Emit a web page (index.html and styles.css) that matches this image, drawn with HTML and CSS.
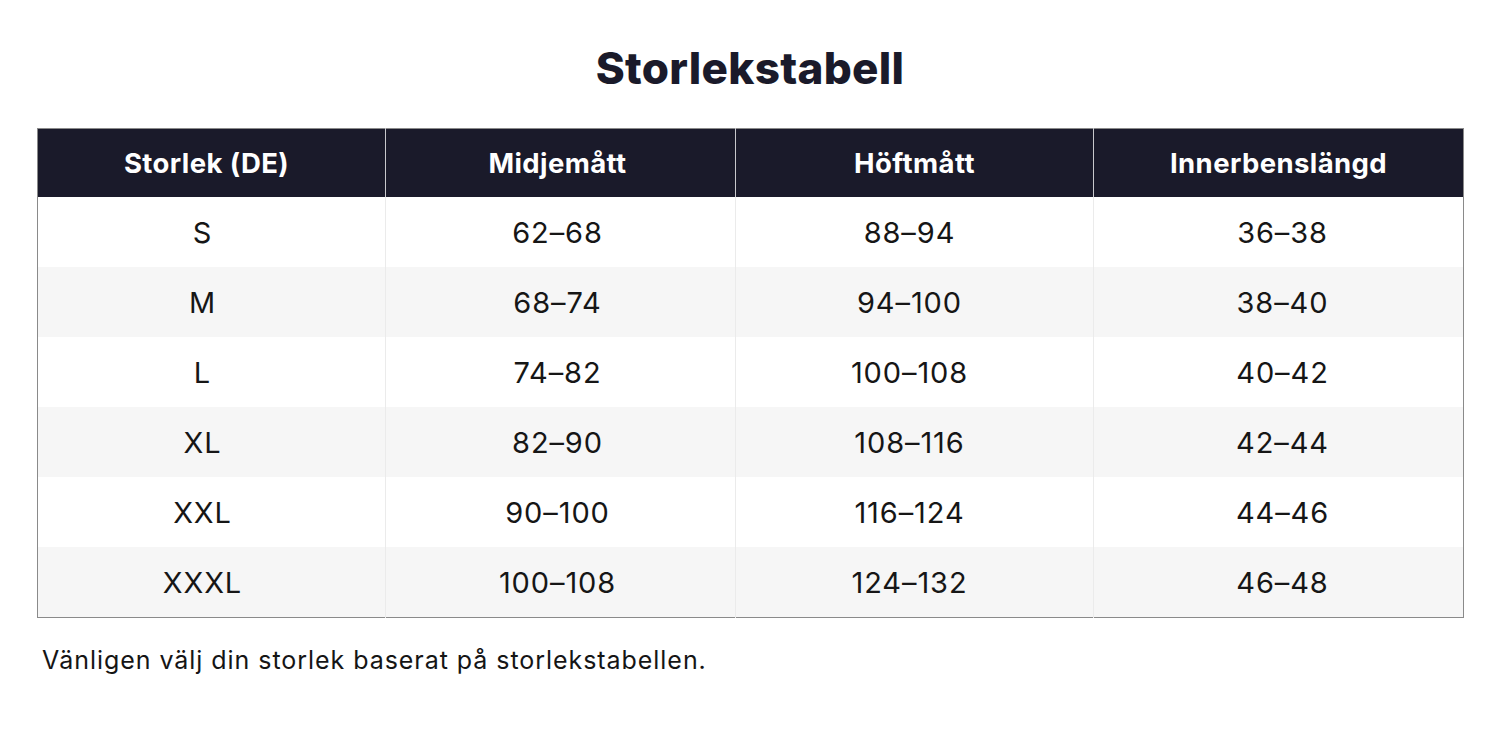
FILE: index.html
```html
<!DOCTYPE html>
<html lang="sv">
<head>
<meta charset="utf-8">
<title>Storlekstabell</title>
<link rel="stylesheet" href="styles.css">
</head>
<body>
<main class="page">
  <h1 class="title">Storlekstabell</h1>
  <table class="size-table">
    <colgroup>
      <col class="c1"><col class="c2"><col class="c3"><col class="c4">
    </colgroup>
    <thead>
      <tr>
        <th>Storlek (DE)</th>
        <th>Midjemått</th>
        <th>Höftmått</th>
        <th>Innerbenslängd</th>
      </tr>
    </thead>
    <tbody>
      <tr><td>S</td><td>62–68</td><td>88–94</td><td>36–38</td></tr>
      <tr><td>M</td><td>68–74</td><td>94–100</td><td>38–40</td></tr>
      <tr><td>L</td><td>74–82</td><td>100–108</td><td>40–42</td></tr>
      <tr><td>XL</td><td>82–90</td><td>108–116</td><td>42–44</td></tr>
      <tr><td>XXL</td><td>90–100</td><td>116–124</td><td>44–46</td></tr>
      <tr><td>XXXL</td><td>100–108</td><td>124–132</td><td>46–48</td></tr>
    </tbody>
  </table>
  <p class="note">Vänligen välj din storlek baserat på storlekstabellen.</p>
</main>
</body>
</html>
```

FILE: styles.css
```css
html, body {
  margin: 0;
  padding: 0;
  background: #ffffff;
}

body {
  font-family: Inter, "Noto Sans", "Liberation Sans", sans-serif;
  color: #1b1b1f;
}

.page {
  padding: 0 37px;
}

.title {
  margin: 42px 0 34px;
  font-size: 44px;
  line-height: 52px;
  font-weight: 800;
  text-align: center;
  color: #1a1a2a;
  letter-spacing: 0.3px;
}

.size-table {
  width: 1426px;
  border-collapse: collapse;
  table-layout: fixed;
  border: 1px solid #8a8a8a;
}

.c1 { width: 348px; }
.c2 { width: 350px; }
.c3 { width: 358px; }
.c4 { width: 370px; }

.size-table th {
  background: #1a1a2a;
  color: #ffffff;
  height: 68px;
  padding: 0;
  font-size: 27.5px;
  font-weight: 700;
  letter-spacing: 0.4px;
  text-align: center;
  vertical-align: middle;
  border-left: 1px solid #c8c8cc;
}

.size-table th:first-child {
  border-left: none;
  padding-right: 10px;
}

.size-table th:nth-child(2) {
  padding-right: 6px;
}

.size-table td {
  height: 70px;
  padding: 0;
  font-size: 29px;
  font-weight: 400;
  letter-spacing: 0.9px;
  text-align: center;
  vertical-align: middle;
  color: #161616;
  border-left: 1px solid #ebebeb;
}

.size-table td:first-child {
  border-left: none;
  padding-right: 18px;
}

.size-table td:nth-child(2) {
  padding-right: 6px;
}

.size-table td:nth-child(3) {
  padding-right: 10px;
}

.size-table td:nth-child(4) {
  padding-left: 8px;
}

.size-table tbody tr:nth-child(even) td {
  background: #f6f6f6;
}

.note {
  margin: 27px 0 0 5px;
  font-size: 25px;
  line-height: 30px;
  letter-spacing: 0.95px;
  color: #151515;
}
```
